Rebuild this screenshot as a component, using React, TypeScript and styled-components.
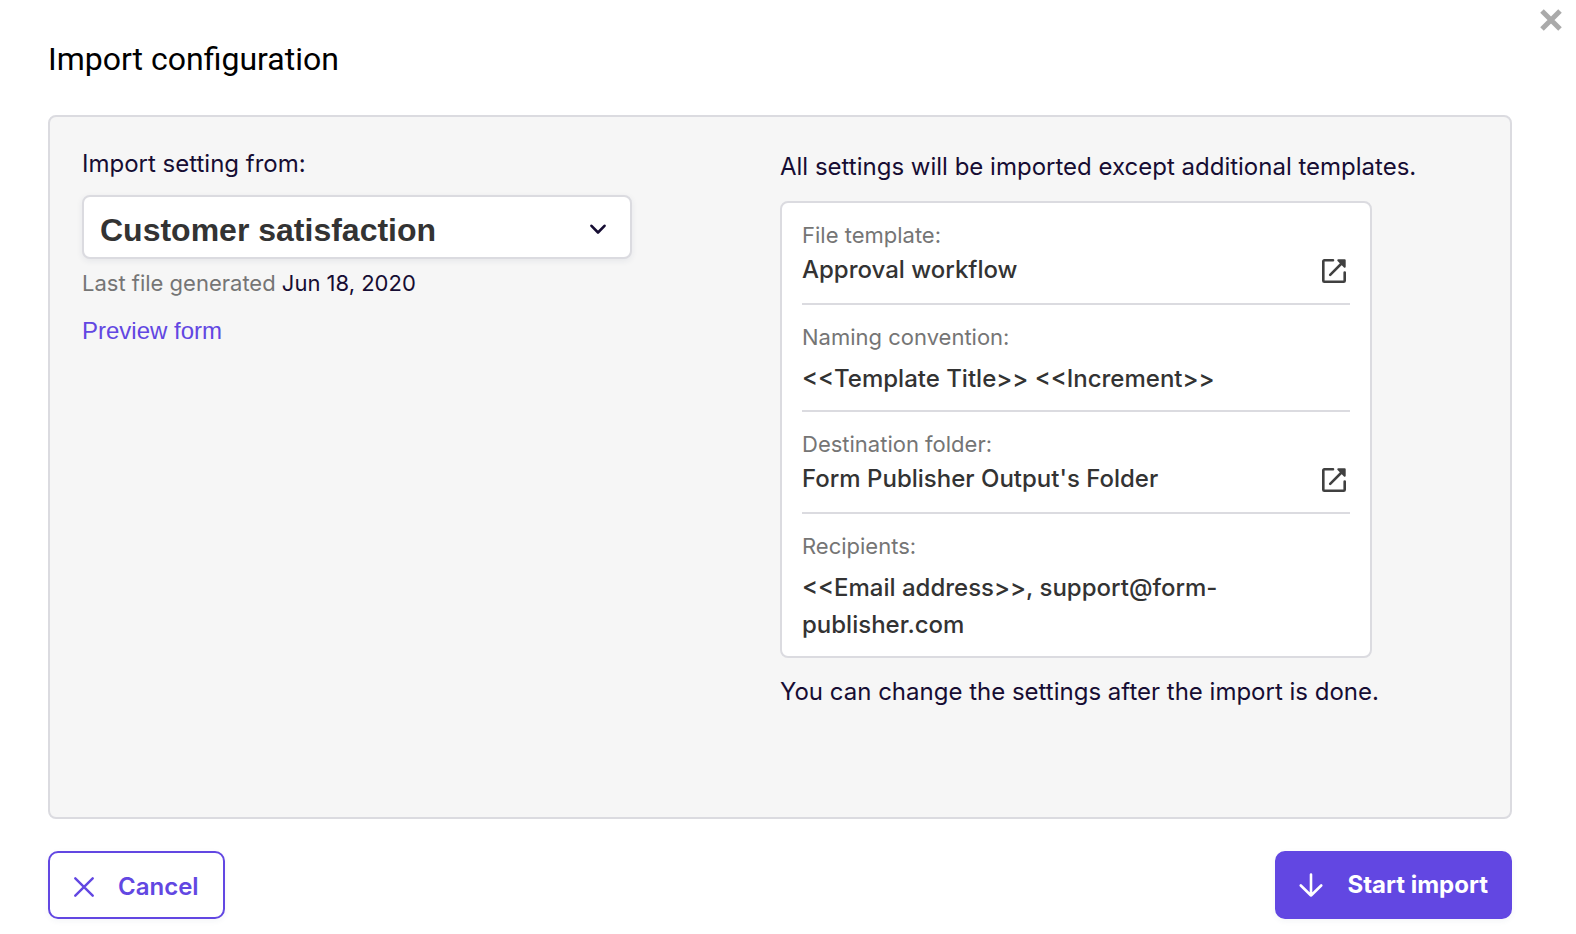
import React from "react";
import styled, { createGlobalStyle } from "styled-components";

const GlobalStyle = createGlobalStyle`
  *, *::before, *::after { box-sizing: border-box; }
  body {
    margin: 0;
    background: #fff;
    color: #160d33;
    font-family: Inter, "Liberation Sans", sans-serif;
    font-size: 24px;
    line-height: 30px;
  }
  button, select { font: inherit; }
`;

const Dialog = styled.main`
  position: relative;
  padding: 38px 64px 15px 48px;
`;

const CloseButton = styled.button`
  position: absolute;
  top: 9px;
  right: 14px;
  display: flex;
  padding: 0;
  border: 0;
  background: none;
  color: #aaaaaa;
  cursor: pointer;
`;

const Title = styled.h1`
  margin: 0;
  color: #000;
  font-family: Roboto, sans-serif;
  font-size: 32px;
  line-height: 42px;
  font-weight: 400;
`;

const Panel = styled.section`
  display: grid;
  grid-template-columns: 1fr 1fr;
  min-height: 704px;
  margin: 35px 0 32px;
  border: 2px solid #dbdbe0;
  border-radius: 8px;
  background: #f6f6f6;
`;

const Source = styled.div`
  padding: 32px;
`;

const Summary = styled.div`
  padding-top: 35px;
`;

const FieldLabel = styled.label`
  display: block;
  margin-bottom: 16px;
`;

const SelectBox = styled.div`
  position: relative;
  max-width: 550px;

  svg {
    position: absolute;
    right: 26px;
    top: 29px;
    pointer-events: none;
  }
`;

const Select = styled.select`
  appearance: none;
  display: block;
  width: 100%;
  height: 64px;
  padding: 5px 60px 0 16px;
  border: 2px solid #dbdbe0;
  border-radius: 8px;
  background: #fff;
  box-shadow: 0 2px 6px rgba(40, 50, 90, 0.08);
  color: #333;
  font-family: "Liberation Sans", Arial, sans-serif;
  font-size: 32px;
  font-weight: 700;
`;

const Generated = styled.p`
  margin: 9px 0 18px;
  color: #160d33;
  font-size: 22px;

  span { color: #757575; }
`;

const PreviewLink = styled.a`
  color: #6247e2;
  font-family: "Liberation Sans", Arial, sans-serif;
  text-decoration: none;
`;

const Note = styled.p`
  margin: 0;
`;

const Card = styled.dl`
  width: 592px;
  max-width: 100%;
  margin: 19px 0;
  padding: 0 20px;
  border: 2px solid #dbdbe0;
  border-radius: 8px;
  background: #fff;
`;

const Row = styled.div<{ $linked?: boolean }>`
  padding: 19px 0 ${(p) => (p.$linked ? 15 : 13)}px;

  & + & { border-top: 2px solid #dbdbe0; }
`;

const Term = styled.dt`
  color: #757575;
  font-size: 22px;
  line-height: 26px;
`;

const Value = styled.dd<{ $linked?: boolean }>`
  display: flex;
  align-items: center;
  justify-content: space-between;
  margin: ${(p) => (p.$linked ? 3 : 10)}px 0 0;
  color: #333;
  font-weight: 500;
  line-height: 37px;
`;

const OpenLink = styled.a`
  display: flex;
  padding: 2px 4px 0 0;
  color: #404040;
`;

const Actions = styled.footer`
  display: flex;
  justify-content: space-between;
`;

const Button = styled.button<{ $primary?: boolean }>`
  display: flex;
  align-items: center;
  gap: 24px;
  height: 68px;
  padding: ${(p) => (p.$primary ? "0 22px" : "3px 24px 0")};
  border: 2px solid #6247e2;
  border-radius: 10px;
  background: ${(p) => (p.$primary ? "#6247e2" : "#fff")};
  color: ${(p) => (p.$primary ? "#fff" : "#6247e2")};
  box-shadow: 0 2px 6px rgba(40, 50, 90, 0.05);
  font-weight: ${(p) => (p.$primary ? 700 : 600)};
  cursor: pointer;
`;

const OpenIcon = () => (
  <svg width="24" height="24" viewBox="0 0 24 24" fill="none" stroke="currentColor" strokeWidth="2.6" strokeLinecap="round" strokeLinejoin="round" aria-hidden="true">
    <path d="M11 1.3H2.3a1 1 0 0 0-1 1v19.4a1 1 0 0 0 1 1h19.4a1 1 0 0 0 1-1V13.5" />
    <path d="M8.2 15.8 21 3" />
    <path d="M16.3 1.3h6.400v6.400z" fill="currentColor" strokeWidth="2" />
  </svg>
);

type Setting = { term: string; value: string; linked?: boolean };

const settings: Setting[] = [
  { term: "File template:", value: "Approval workflow", linked: true },
  { term: "Naming convention:", value: "<<Template Title>> <<Increment>>" },
  { term: "Destination folder:", value: "Form Publisher Output's Folder", linked: true },
  { term: "Recipients:", value: "<<Email address>>, support@form-publisher.com" },
];

export default function App() {
  return (
    <>
      <GlobalStyle />
      <Dialog>
        <CloseButton type="button" aria-label="Close">
          <svg width="22" height="22" viewBox="0 0 22 22" stroke="currentColor" strokeWidth="5" aria-hidden="true">
            <path d="M2 2l18 18M20 2 2 20" />
          </svg>
        </CloseButton>
        <Title>Import configuration</Title>
        <Panel>
          <Source>
            <FieldLabel htmlFor="source">Import setting from:</FieldLabel>
            <SelectBox>
              <Select id="source">
                <option>Customer satisfaction</option>
              </Select>
              <svg width="16" height="11" viewBox="0 0 16 11" fill="none" stroke="#160d33" strokeWidth="2.6" strokeLinecap="round" strokeLinejoin="round" aria-hidden="true">
                <path d="M1.5 1.8 8 8.5l6.500-6.700" />
              </svg>
            </SelectBox>
            <Generated><span>Last file generated</span> Jun 18, 2020</Generated>
            <PreviewLink href="#preview">Preview form</PreviewLink>
          </Source>
          <Summary>
            <Note>All settings will be imported except additional templates.</Note>
            <Card>
              {settings.map((s) => (
                <Row key={s.term} $linked={s.linked}>
                  <Term>{s.term}</Term>
                  <Value $linked={s.linked}>
                    {s.value}
                    {s.linked && (
                      <OpenLink href="#open" aria-label={`Open ${s.value}`}><OpenIcon /></OpenLink>
                    )}
                  </Value>
                </Row>
              ))}
            </Card>
            <Note>You can change the settings after the import is done.</Note>
          </Summary>
        </Panel>
        <Actions>
          <Button type="button">
            <svg width="20" height="20" viewBox="0 0 20 20" fill="none" stroke="currentColor" strokeWidth="2.400" strokeLinecap="round" aria-hidden="true">
              <path d="M1.300 1.300l17.400 17.400M18.700 1.300 1.300 18.700" />
            </svg>
            Cancel
          </Button>
          <Button type="button" $primary>
            <svg width="24" height="24" viewBox="0 0 24 24" fill="none" stroke="currentColor" strokeWidth="2.600" strokeLinecap="round" strokeLinejoin="round" aria-hidden="true">
              <path d="M12 1.500v21M1.800 12.500 12 22.500l10.200-10" />
            </svg>
            Start import
          </Button>
        </Actions>
      </Dialog>
    </>
  );
}
